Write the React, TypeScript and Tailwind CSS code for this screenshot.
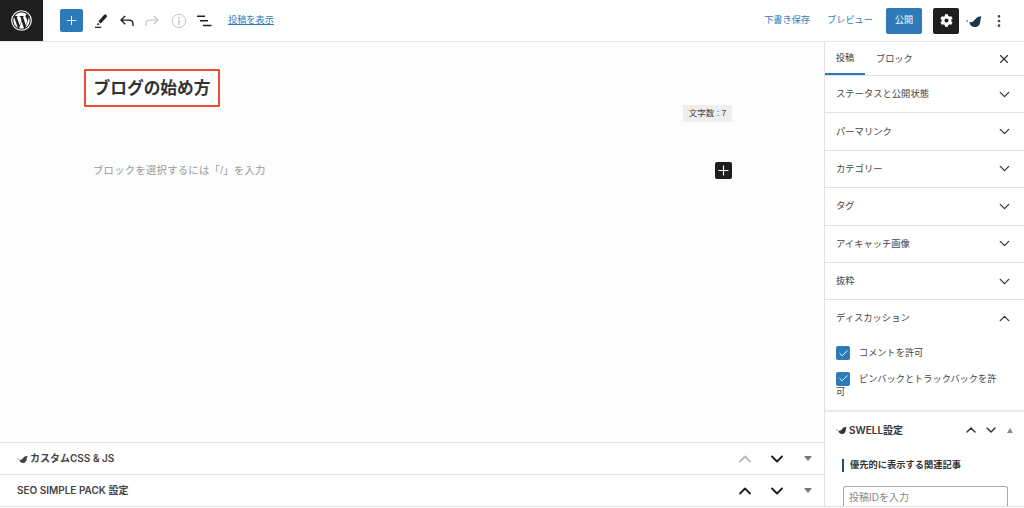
import React from 'react';
import { ChevronDown, ChevronUp, Check, X, MoreVertical } from 'lucide-react';
import { FaCog } from 'react-icons/fa';

const FONT = "font-['Liberation_Sans','Noto_Sans_CJK_JP',sans-serif]";
const META_FONT = "font-['Inter','Noto_Sans_CJK_JP',sans-serif]";

const panels = ['ステータスと公開状態', 'パーマリンク', 'カテゴリー', 'タグ', 'アイキャッチ画像', '抜粋'];

// swell bird mark
const Bird = ({ className }: { className: string }) => (
  <svg viewBox="0 0 16 12" className={className} fill="currentColor">
    <circle cx="1.300" cy="6" r="0.800" />
    <path d="M15.500 1.500C12 1 10.500 2.500 9 4.500 7.500 6.500 6 7.500 3.500 7c0 2.500 2 5 5.500 5s5-2.500 5.300-5.500c.2-2 .5-3.500 1.200-5z" />
  </svg>
);

const MetaArrows = ({ upMuted }: { upMuted?: boolean }) => (
  <div className="flex items-center">
    <ChevronUp size={20} strokeWidth={2.2} className={upMuted ? 'text-[#b8b8b8]' : 'text-[#1e1e1e]'} />
    <ChevronDown size={20} strokeWidth={2.2} className="ml-[12px] text-[#1e1e1e]" />
    <span className="ml-[17px] mr-[12px] h-0 w-0 border-x-[4px] border-t-[5px] border-x-transparent border-t-[#777]" />
  </div>
);

const CheckRow = ({ children }: { children: React.ReactNode }) => (
  <div className="text-[9.200px] leading-[14px] text-[#444]">
    <span className="mr-[9px] inline-flex h-[14px] w-[14px] translate-y-[3px] items-center justify-center rounded-[2px] bg-[#2e7ab8] text-white">
      <Check size={11} strokeWidth={2} />
    </span>
    {children}
  </div>
);

const App: React.FC = () => {
  return (
    <div className={`flex h-[508px] w-[1024px] flex-col overflow-hidden bg-white ${FONT}`}>
      {/* Top bar */}
      <header className="flex h-[42px] shrink-0 items-center border-b border-[#e6e6e6]">
        <div className="flex h-[41px] w-[43px] shrink-0 items-center justify-center bg-[#1e1e1e]">
          <svg viewBox="0 0 24 24" className="h-[23px] w-[23px]" fill="none">
            <circle cx="12" cy="12" r="10.200" stroke="#fff" strokeWidth="1.200" />
            <path fill="#fff" d="M3.500 12c0 3.400 2 6.300 4.800 7.700L4.300 8.600A8.500 8.500 0 0 0 3.500 12zm14.200-.4c0-1-.4-1.800-.7-2.300-.4-.7-.8-1.300-.8-2 0-.8.600-1.500 1.400-1.500h.1A8.500 8.500 0 0 0 5 7.300h.6c.9 0 2.300-.1 2.300-.1.500 0 .5.700.1.700 0 0-.5.100-1 .1l3.100 9.200 1.900-5.600-1.300-3.600c-.5 0-.9-.1-.9-.1-.5 0-.4-.7 0-.7 0 0 1.400.1 2.300.1.900 0 2.300-.1 2.300-.1.500 0 .5.700.1.700 0 0-.5.100-1 .1l3.100 9.100.9-2.900c.4-1.200.6-2 .6-2.700zm-5.600 1.200-2.600 7.400a8.500 8.500 0 0 0 5.200-.1l-.1-.1-2.500-7.200zm7.300-4.800.1.900c0 .9-.2 1.800-.7 3l-2.600 7.500a8.500 8.500 0 0 0 3.200-11.400z" />
          </svg>
        </div>
        <div className="ml-[17px] flex h-[23px] w-[23px] items-center justify-center rounded-[2px] bg-[#2e7ab8]">
          <svg viewBox="0 0 24 24" className="h-[17px] w-[17px]" fill="#fff"><path d="M11.300 5.500h1.400v5.800h5.800v1.400h-5.800v5.800h-1.400v-5.800H5.500v-1.400h5.800z" /></svg>
        </div>
        <svg viewBox="0 0 24 24" className="ml-[7px] h-[20px] w-[20px]" fill="#1e1e1e">
          <path d="M19.500 4.500c-1-.7-2-.5-2.800.4l-6.600 7.800 2.800 2.300 6.900-7.500c.8-.9.700-2.200-.3-3zM9.300 14l-1.200 3.300 3.400-1.300zM6 18.800h7.500v1.500H6z" />
        </svg>
        <svg viewBox="0 0 24 24" className="ml-[6px] h-[22px] w-[22px]" fill="none" stroke="#1e1e1e" strokeWidth="1.500">
          <path d="M10 6.500 5.500 11l4.500 4.500M5.500 11h9c2.500 0 4 1.500 4 4v2.500" />
        </svg>
        <svg viewBox="0 0 24 24" className="ml-[3px] h-[22px] w-[22px]" fill="none" stroke="#c8c8c8" strokeWidth="1.500">
          <path d="m14 6.500 4.500 4.500-4.500 4.500M18.500 11h-9c-2.500 0-4 1.500-4 4v2.500" />
        </svg>
        <svg viewBox="0 0 24 24" className="ml-[8px] h-[16px] w-[16px]" fill="none" stroke="#bdbdbd" strokeWidth="1.400">
          <circle cx="12" cy="12" r="10" />
          <path d="M12 10.500v7M12 6.500v2" strokeWidth="2" />
        </svg>
        <svg viewBox="0 0 16 14" className="ml-[9px] h-[14px] w-[16px]" fill="#1e1e1e">
          <path d="M1 1.500h8v1.400H1zM4 6h8v1.400H4zM7 10.800h8.500v1.400H7z" />
        </svg>
        <a className="ml-[16px] text-[9.200px] text-[#2e7ab8] underline">投稿を表示</a>
        <span className="ml-auto text-[9.200px] text-[#2e7ab8]">下書き保存</span>
        <span className="ml-[17px] text-[9.200px] text-[#2e7ab8]">プレビュー</span>
        <span className="ml-[13px] flex h-[26px] w-[36px] items-center justify-center rounded-[2px] bg-[#2e7ab8] text-[9.200px] text-white">公開</span>
        <span className="ml-[11px] flex h-[26px] w-[26px] items-center justify-center rounded-[2px] bg-[#1e1e1e] text-white">
          <FaCog size={13} />
        </span>
        <Bird className="ml-[7px] h-[12px] w-[16px] text-[#17384f]" />
        <MoreVertical size={16} strokeWidth={2} className="ml-[9px] mr-[17px] text-[#444]" />
      </header>

      <div className="flex min-h-0 flex-1">
        {/* Editor column */}
        <main className="flex min-w-0 flex-1 flex-col bg-[#fdfdfd]">
          <div className="flex-1 pl-[84px] pr-[92px] pt-[27px]">
            <h1 className="flex h-[38px] w-[136px] items-center justify-center border-2 border-[#ee4f36] pt-[1px] text-[16.700px] font-bold text-[#333]">
              ブログの始め方
            </h1>
            <div className="mt-[-2px] flex justify-end">
              <span className="flex h-[17px] w-[49px] items-center justify-center bg-[#eeeeee] text-[8.500px] text-[#444]">文字数 : 7</span>
            </div>
            <div className="mt-[40px] flex items-center justify-between pl-[9px]">
              <span className="text-[10.300px] tracking-[0.3px] text-[#999]">ブロックを選択するには「/」を入力</span>
              <span className="flex h-[17px] w-[17px] items-center justify-center rounded-[2px] bg-[#1e1e1e]">
                <svg viewBox="0 0 24 24" className="h-[17px] w-[17px]" fill="#fff"><path d="M11.200 5h1.600v6.200H19v1.600h-6.200V19h-1.600v-6.200H5v-1.600h6.200z" /></svg>
              </span>
            </div>
          </div>
          <div className="flex h-[32px] shrink-0 items-center justify-between border-t border-[#e2e2e2] bg-white pl-[17px]">
            <span className={`flex items-center text-[10px] font-semibold text-[#444] ${META_FONT}`}>
              <Bird className="mr-[2px] h-[8px] w-[11px] text-[#444]" />カスタムCSS &amp; JS
            </span>
            <MetaArrows upMuted />
          </div>
          <div className="flex h-[32px] shrink-0 items-center justify-between border-t border-[#e2e2e2] bg-white pl-[17px]">
            <span className={`text-[10px] font-semibold text-[#444] ${META_FONT}`}>SEO SIMPLE PACK 設定</span>
            <MetaArrows />
          </div>
        </main>

        {/* Settings sidebar */}
        <aside className="flex w-[200px] shrink-0 flex-col overflow-hidden border-l border-[#e2e2e2] bg-white">
          <div className="flex h-[34px] shrink-0 items-stretch border-b border-[#e2e2e2] text-[9.200px]">
            <span className="flex w-[40px] items-center justify-center border-b-[2px] border-[#2e7ab8] pt-[2px] text-[#333]">投稿</span>
            <span className="ml-[11px] flex items-center whitespace-nowrap pt-[2px] text-[#444]">ブロック</span>
            <X size={14} strokeWidth={2} className="ml-auto mr-[13px] self-center text-[#333]" />
          </div>
          {panels.map(label => (
            <div key={label} className="flex h-[37.400px] shrink-0 items-center justify-between border-b border-[#e2e2e2] pl-[11px] pr-[11px] text-[9.300px] text-[#444]">
              <span className="pt-[2px]">{label}</span>
              <ChevronDown size={17} strokeWidth={1.8} className="text-[#333]" />
            </div>
          ))}
          <div className="h-[112px] shrink-0 border-b-[2px] border-[#e8e8e8] pl-[11px] pr-[20px] pt-[10px]">
            <div className="-mr-[9px] flex items-center justify-between text-[9.300px] text-[#444]">
              ディスカッション
              <ChevronUp size={17} strokeWidth={1.8} className="text-[#333]" />
            </div>
            <div className="mt-[16px] flex flex-col gap-[9px]">
              <CheckRow>コメントを許可</CheckRow>
              <CheckRow>ピンバックとトラックバックを許可</CheckRow>
            </div>
          </div>
          <div className="flex h-[36px] shrink-0 items-center justify-between pl-[11px] pr-[10px]">
            <span className={`flex items-center text-[10px] font-semibold text-[#333] ${META_FONT}`}>
              <Bird className="mr-[2px] h-[8px] w-[11px] text-[#333]" />SWELL設定
            </span>
            <span className="mr-[1px] flex items-center">
              <ChevronUp size={16} strokeWidth={2.2} className="text-[#333]" />
              <ChevronDown size={16} strokeWidth={2.2} className="ml-[4px] text-[#333]" />
              <span className="ml-[8px] h-0 w-0 border-x-[3.500px] border-b-[5px] border-x-transparent border-b-[#888]" />
            </span>
          </div>
          <div className="ml-[17px] mt-[11px] border-l-2 border-[#1f4e70] pl-[6px] text-[9.250px] font-bold leading-[13px] text-[#333]">優先的に表示する関連記事</div>
          <div className="ml-[18px] mr-[16px] mt-[14px] h-[24px] shrink-0 rounded-t-[3px] border border-b-0 border-[#aaa] px-[5px] pt-[3px] text-[10px] text-[#888]">投稿IDを入力</div>
        </aside>
      </div>
      <div className="h-[2px] shrink-0 border-t border-[#e2e2e2] bg-white" />
    </div>
  );
};

export default App;
